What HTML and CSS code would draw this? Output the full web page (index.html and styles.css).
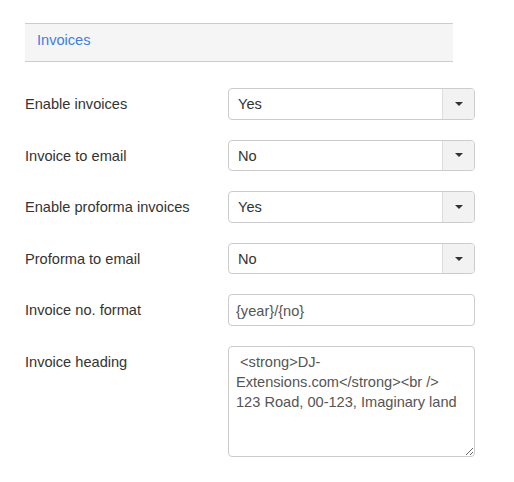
FILE: index.html
```html
<!DOCTYPE html>
<html>
<head>
<meta charset="utf-8">
<link rel="stylesheet" href="styles.css">
</head>
<body>
<div class="page">
  <div class="section-head">Invoices</div>
  <div class="form">
    <div class="row">
      <label class="label">Enable invoices</label>
      <div class="select"><span class="select-value">Yes</span><span class="select-btn"><span class="caret"></span></span></div>
    </div>
    <div class="row">
      <label class="label">Invoice to email</label>
      <div class="select"><span class="select-value">No</span><span class="select-btn"><span class="caret"></span></span></div>
    </div>
    <div class="row">
      <label class="label">Enable proforma invoices</label>
      <div class="select"><span class="select-value">Yes</span><span class="select-btn"><span class="caret"></span></span></div>
    </div>
    <div class="row">
      <label class="label">Proforma to email</label>
      <div class="select"><span class="select-value">No</span><span class="select-btn"><span class="caret"></span></span></div>
    </div>
    <div class="row">
      <label class="label">Invoice no. format</label>
      <input class="input" type="text" value="{year}/{no}">
    </div>
    <div class="row">
      <label class="label">Invoice heading</label>
      <textarea class="textarea"> &lt;strong&gt;DJ-Extensions.com&lt;/strong&gt;&lt;br /&gt;
123 Road, 00-123, Imaginary land</textarea>
    </div>
  </div>
</div>
</body>
</html>
```
FILE: styles.css
```css
* { box-sizing: border-box; }
html, body { margin: 0; padding: 0; background: #fff; }
body {
  font-family: "Liberation Sans", Arial, sans-serif;
  font-size: 14.6px;
  color: #333;
}
.page {
  padding: 23px 0 0 25px;
}
.section-head {
  width: 428px;
  height: 39px;
  background: #f5f5f5;
  border-top: 1px solid #cccccc;
  border-bottom: 1px solid #cccccc;
  color: #3d7fe0;
  line-height: 20px;
  padding: 6px 12px 11px;
}
.form {
  margin-top: 26px;
  display: flex;
  flex-direction: column;
}
.row {
  display: flex;
  align-items: flex-start;
  margin-bottom: 20px;
}
.label {
  width: 203px;
  flex: none;
  line-height: 20px;
  padding-top: 6px;
  color: #333;
}
.select {
  width: 247px;
  height: 31.6px;
  border: 1px solid #cccccc;
  border-radius: 4px;
  display: flex;
  background: #fff;
  overflow: hidden;
}
.select-value {
  flex: 1;
  padding: 0 9px;
  line-height: 30px;
  color: #333;
}
.select-btn {
  width: 32px;
  flex: none;
  background: #f2f2f2;
  border-left: 1px solid #dddddd;
  display: flex;
  align-items: center;
  justify-content: center;
}
.caret {
  width: 0;
  height: 0;
  border-top: 4px solid #333;
  border-left: 4px solid transparent;
  border-right: 4px solid transparent;
}
.input {
  width: 247px;
  height: 31.6px;
  border: 1px solid #cccccc;
  border-radius: 4px;
  padding: 1px 7px 0;
  font-family: inherit;
  font-size: 14.6px;
  color: #555;
  line-height: 28px;
  outline: none;
  margin: 0;
}
.textarea {
  width: 247px;
  height: 111px;
  border: 1px solid #cccccc;
  border-radius: 4px;
  padding: 5px 7px;
  font-family: inherit;
  font-size: 14.6px;
  line-height: 20px;
  color: #555;
  resize: vertical;
  outline: none;
  margin: 0;
}
```
